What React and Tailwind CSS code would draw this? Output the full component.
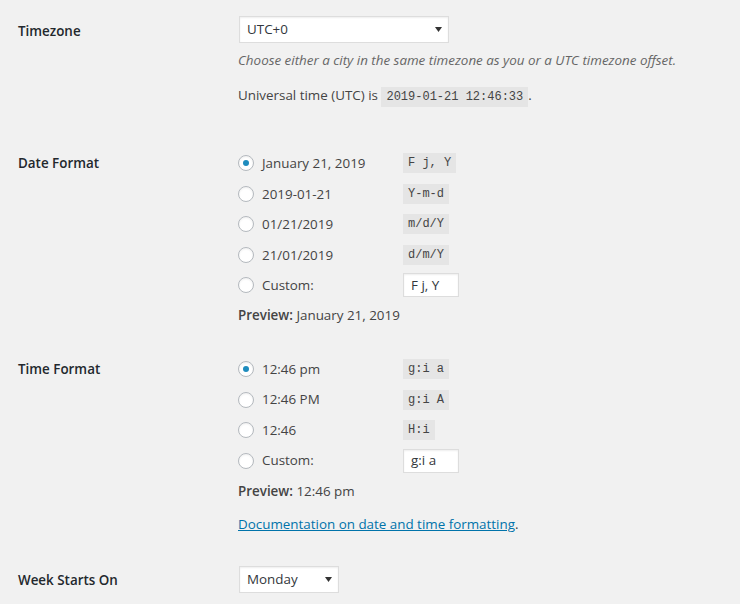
import React from 'react'

const font = { fontFamily: '"Open Sans", "Noto Sans", sans-serif' }

const Code = ({ children }) => (
    <code className="inline-block bg-[#e5e5e5] px-[5px] h-[20px] leading-[20px] text-[12px] text-[#444] font-['Liberation_Mono',monospace]">
        {children}
    </code>
)

const Radio = ({ checked }) => (
    <span className="w-4 h-4 rounded-full border border-[#b4b9be] bg-white shadow-[inset_0_1px_2px_rgba(0,0,0,0.07)] flex items-center justify-center flex-shrink-0">
        {checked && <span className="w-[6px] h-[6px] rounded-full bg-[#1e8cbe]" />}
    </span>
)

const Select = ({ value, width }) => (
    <div className={`${width} ml-px h-[27px] bg-white border border-[#ddd] shadow-[inset_0_1px_2px_rgba(0,0,0,0.07)] flex items-center justify-between pl-[7px] pr-[6px] text-[#32373c]`}>
        <span>{value}</span>
        <svg width="7" height="5" viewBox="0 0 7 5"><path d="M0 0h7L3.5 5z" fill="#333" /></svg>
    </div>
)

const Label = ({ children, className = '' }) => (
    <div className={`w-[238px] pl-[18px] flex-shrink-0 flex items-center font-semibold text-[#23282d] ${className}`}>{children}</div>
)

const OptionRow = ({ checked, text, format, custom }) => (
    <div className="h-[30.5px] flex items-center">
        <Radio checked={checked} />
        <span className="ml-[8px] w-[141px]">{text}</span>
        {custom
            ? <span className="w-[56px] h-[24px] bg-white border border-[#ddd] shadow-[inset_0_1px_2px_rgba(0,0,0,0.07)] flex items-center pl-[7px] text-[#32373c]">{format}</span>
            : <Code>{format}</Code>}
    </div>
)

export default function App() {
    const dateFormats = [
        { text: 'January 21, 2019', format: 'F j, Y', checked: true },
        { text: '2019-01-21', format: 'Y-m-d' },
        { text: '01/21/2019', format: 'm/d/Y' },
        { text: '21/01/2019', format: 'd/m/Y' },
        { text: 'Custom:', format: 'F j, Y', custom: true },
    ]
    const timeFormats = [
        { text: '12:46 pm', format: 'g:i a', checked: true },
        { text: '12:46 PM', format: 'g:i A' },
        { text: '12:46', format: 'H:i' },
        { text: 'Custom:', format: 'g:i a', custom: true },
    ]

    return (
        <div className="w-[740px] h-[604px] bg-[#f1f1f1] text-[13.4px] text-[#444] overflow-hidden" style={font}>
            {/* Timezone */}
            <div className="flex pt-[16px]">
                <Label className="h-[27px] pt-[3px]">Timezone</Label>
                <div className="flex flex-col">
                    <Select value="UTC+0" width="w-[210px]" />
                    <p className="mt-[7px] leading-[20px] italic text-[#666]">
                        Choose either a city in the same timezone as you or a UTC timezone offset.
                    </p>
                    <p className="mt-[15px] leading-[20px]">
                        Universal time (UTC) is <Code>2019-01-21 12:46:33</Code>.
                    </p>
                </div>
            </div>

            {/* Date Format */}
            <div className="flex mt-[41px]">
                <Label className="h-[30.5px]">Date Format</Label>
                <div className="flex flex-col">
                    {dateFormats.map((f, i) => <OptionRow key={i} {...f} />)}
                    <p className="mt-[4.5px] leading-[20px]"><span className="font-semibold">Preview:</span> January 21, 2019</p>
                </div>
            </div>

            {/* Time Format */}
            <div className="flex mt-[28.75px]">
                <Label className="h-[30.5px]">Time Format</Label>
                <div className="flex flex-col">
                    {timeFormats.map((f, i) => <OptionRow key={i} {...f} />)}
                    <p className="mt-[5.25px] leading-[20px]"><span className="font-semibold">Preview:</span> 12:46 pm</p>
                    <p className="mt-[13px] leading-[20px]">
                        <a href="#" className="text-[#0073aa] underline">Documentation on date and time formatting</a>.
                    </p>
                </div>
            </div>

            {/* Week Starts On */}
            <div className="flex mt-[32px]">
                <Label className="h-[27px] pt-[2px]">Week Starts On</Label>
                <Select value="Monday" width="w-[100px]" />
            </div>
        </div>
    )
}
